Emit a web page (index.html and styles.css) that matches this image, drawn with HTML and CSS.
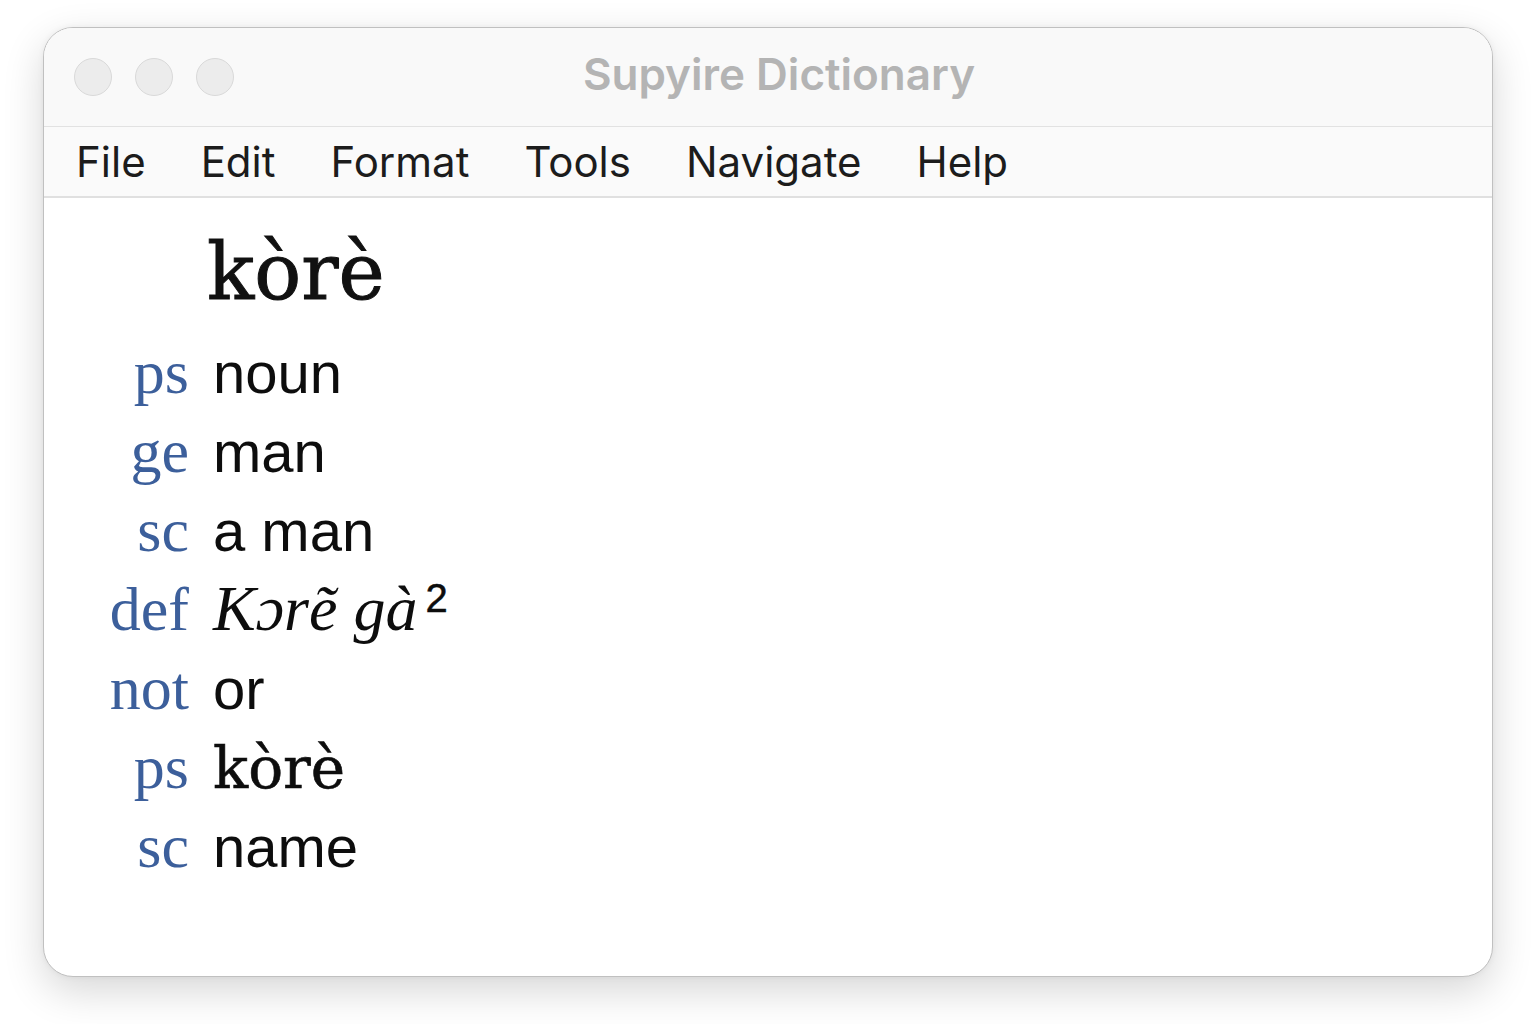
FILE: index.html
```html
<!DOCTYPE html>
<html lang="en">
<head>
<meta charset="utf-8">
<title>Supyire Dictionary</title>
<link rel="stylesheet" href="styles.css">
</head>
<body>
<div class="window">
  <div class="titlebar">
    <div class="lights">
      <span class="light"></span>
      <span class="light"></span>
      <span class="light"></span>
    </div>
    <div class="title">Supyire Dictionary</div>
    <div class="spacer"></div>
  </div>
  <nav class="menubar">
    <span class="menu-item">File</span>
    <span class="menu-item">Edit</span>
    <span class="menu-item">Format</span>
    <span class="menu-item">Tools</span>
    <span class="menu-item">Navigate</span>
    <span class="menu-item">Help</span>
  </nav>
  <main class="content">
    <div class="entry">
      <div class="label-col"></div>
      <h1 class="headword">kòrè</h1>

      <div class="label">ps</div><div class="value">noun</div>
      <div class="label">ge</div><div class="value">man</div>
      <div class="label">sc</div><div class="value">a man</div>
      <div class="label">def</div><div class="value def"><span class="def-text">Kɔrẽ gà</span><span class="sup">2</span></div>
      <div class="label">not</div><div class="value">or</div>
      <div class="label">ps</div><div class="value serif-word">kòrè</div>
      <div class="label">sc</div><div class="value">name</div>
    </div>
  </main>
</div>
</body>
</html>
```

FILE: styles.css
```css
html, body {
  margin: 0;
  padding: 0;
  background: #ffffff;
}

body {
  min-height: 1024px;
  box-sizing: border-box;
  padding: 27px 0 0 43px;
  font-family: "Liberation Sans", Arial, sans-serif;
}

.window {
  width: 1450px;
  height: 950px;
  box-sizing: border-box;
  border: 1px solid #c0c0c0;
  border-radius: 30px;
  background: #ffffff;
  overflow: hidden;
  box-shadow: 0 14px 40px rgba(0, 0, 0, 0.16), 0 0 6px rgba(0, 0, 0, 0.05);
  display: flex;
  flex-direction: column;
}

.titlebar {
  height: 98px;
  flex: none;
  background: #f9f9f9;
  border-bottom: 1px solid #e2e2e2;
  display: grid;
  grid-template-columns: 1fr auto 1fr;
  align-items: center;
}

.lights {
  display: flex;
  gap: 23px;
  padding-left: 30px;
}

.light {
  width: 38px;
  height: 38px;
  box-sizing: border-box;
  border-radius: 50%;
  background: #ececec;
  border: 1.5px solid #d9d9d9;
}

.title {
  font-family: "Inter", "Liberation Sans", sans-serif;
  font-size: 44px;
  font-weight: 600;
  color: #b4b4b4;
  padding-left: 22px;
  padding-bottom: 6px;
  line-height: 90px;
}

.menubar {
  height: 71px;
  flex: none;
  background: #fafafa;
  border-bottom: 2px solid #e0e0e0;
  display: flex;
  align-items: center;
  gap: 55px;
  padding-left: 32px;
  box-sizing: border-box;
}

.menu-item {
  font-family: "Inter", "Liberation Sans", sans-serif;
  font-size: 42px;
  color: #1c1c1c;
  line-height: 71px;
}

.content {
  flex: 1;
  padding-top: 24px;
}

.entry {
  display: grid;
  grid-template-columns: 145px auto;
  column-gap: 24px;
  align-items: baseline;
  justify-content: start;
}

.headword {
  margin: 0 0 11px -6px;
  font-family: "DejaVu Serif", "Liberation Serif", serif;
  font-size: 78px;
  font-weight: normal;
  -webkit-text-stroke: 1px #111111;
  line-height: 100px;
  color: #111111;
}

.label {
  font-family: "Liberation Serif", "DejaVu Serif", serif;
  font-size: 62px;
  color: #3c5f9b;
  text-align: right;
  line-height: 78px;
}

.value {
  font-family: "Liberation Sans", Arial, sans-serif;
  font-size: 58px;
  color: #0d0d0d;
  line-height: 78px;
  white-space: nowrap;
}

.def-text {
  font-family: "Liberation Serif", "DejaVu Serif", serif;
  font-style: italic;
  font-size: 64px;
}

.sup {
  font-family: "Liberation Sans", Arial, sans-serif;
  font-size: 40px;
  line-height: 0;
  position: relative;
  top: -18px;
  margin-left: 8px;
  -webkit-text-stroke: 0.5px #0d0d0d;
}

.serif-word {
  font-family: "DejaVu Serif", "Liberation Serif", serif;
  font-size: 58px;
  -webkit-text-stroke: 0.6px #0d0d0d;
}
```
